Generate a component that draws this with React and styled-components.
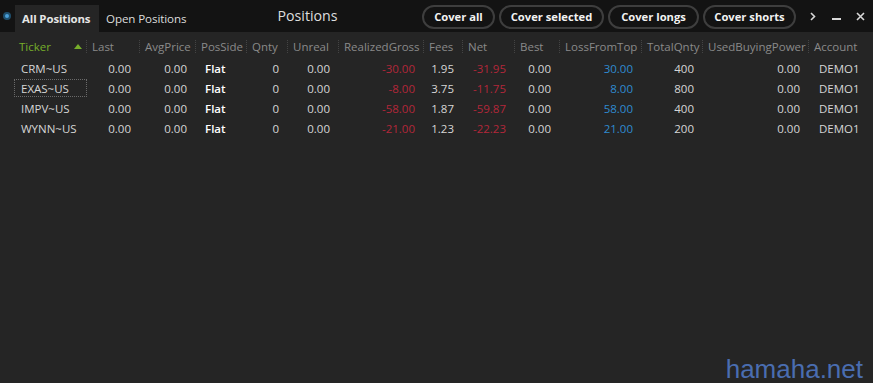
import React from "react";
import styled, { createGlobalStyle } from "styled-components";

const Global = createGlobalStyle`
  html, body { margin: 0; padding: 0; background: #252525; }
  body { font-family: "Open Sans", "Noto Sans", sans-serif; width: 873px; height: 383px; overflow: hidden; }
  #root { width: 873px; height: 383px; }
`;

const Window = styled.div`
  width: 873px;
  height: 383px;
  background: #252525;
  display: flex;
  flex-direction: column;
  position: relative;
  overflow: hidden;
`;

const TopBar = styled.div`
  height: 32px;
  background: #131313;
  display: flex;
  align-items: stretch;
  padding: 0 3px;
  box-sizing: border-box;
`;

const Radio = styled.span`
  width: 8px;
  height: 8px;
  border-radius: 50%;
  box-sizing: border-box;
  border: 2px solid #1f4f6d;
  background: #4a9fd8;
  align-self: center;
  margin-right: 4px;
  margin-top: -1px;
`;

const Tab = styled.div`
  margin-top: 5px;
  padding: 0 7px;
  width: ${p => p.$w}px;
  box-sizing: border-box;
  display: flex;
  align-items: center;
  font-size: ${p => (p.$active ? 11.4 : 11.6)}px;
  letter-spacing: -0.1px;
  color: ${p => (p.$active ? "#e6e6e6" : "#dcdcdc")};
  font-weight: ${p => (p.$active ? 700 : 400)};
  background: ${p => (p.$active ? "#252525" : "transparent")};
  padding-bottom: 1px;
  white-space: nowrap;
`;

const Title = styled.div`
  flex: 1;
  text-align: center;
  align-self: center;
  font-size: 14.2px;
  color: #dedede;
  margin-top: -2px;
`;

const Pills = styled.div`
  display: flex;
  gap: 4px;
  align-items: center;
  padding-top: 1px;
`;

const Pill = styled.button`
  height: 24px;
  border-radius: 12px;
  border: 2px solid #3e3e3e;
  background: #131313;
  color: #f2f2f2;
  font-family: inherit;
  font-weight: 700;
  font-size: 11.2px;
  padding: 0;
  width: ${p => p.$w}px;
  white-space: nowrap;
  display: flex;
  align-items: center;
  justify-content: center;
  box-sizing: border-box;
`;

const WinCtrl = styled.div`
  display: flex;
  align-items: center;
  margin-left: ${p => p.$ml}px;
  width: 20px;
  justify-content: center;
`;

const Grid = styled.div`
  padding: 4px 0 0 14px;
  display: flex;
  flex-direction: column;
`;

const cols = "73px 53px 56px 51px 41px 51px 85px 39px 52px 45px 82px 61px 106px 60px";

const HeaderRow = styled.div`
  display: grid;
  grid-template-columns: ${cols};
  height: 20px;
  align-items: center;
  margin-bottom: 2px;
`;

const HeadCell = styled.div`
  height: 13px;
  line-height: 13px;
  font-size: 11.5px;
  color: ${p => (p.$sorted ? "#76ad2a" : "#8a8a8a")};
  padding-left: 5px;
  padding-right: 5px;
  border-left: ${p => (p.$first ? "none" : "1px dotted #444")};
  display: flex;
  justify-content: space-between;
  align-items: center;
  white-space: nowrap;
  margin-left: ${p => (p.$first ? 0 : -1)}px;
`;

const SortArrow = styled.span`
  width: 0;
  height: 0;
  border-left: 4px solid transparent;
  border-right: 4px solid transparent;
  border-bottom: 5px solid #76ad2a;
`;

const Row = styled.div`
  display: grid;
  grid-template-columns: ${cols};
  height: 20px;
  align-items: center;
`;

const Cell = styled.div`
  font-size: 11.5px;
  color: ${p => p.$color || "#d6d6d6"};
  font-weight: ${p => (p.$bold ? 600 : 400)};
  text-align: ${p => (p.$left ? "left" : "right")};
  padding: ${p => (p.$left ? `0 0 0 ${p.$pl ?? 8}px` : "0 8px 0 0")};
  white-space: nowrap;
  height: 18px;
  line-height: 18px;
  box-sizing: border-box;
  border: ${p => (p.$focus ? "1px dotted #6a6a6a" : "1px solid transparent")};
`;

const Watermark = styled.div`
  position: absolute;
  right: 10px;
  bottom: -2px;
  font-family: "Liberation Sans", Arial, sans-serif;
  font-size: 26px;
  color: #4a6db0;
`;

const headers = [
  "Ticker", "Last", "AvgPrice", "PosSide", "Qnty", "Unreal", "RealizedGross",
  "Fees", "Net", "Best", "LossFromTop", "TotalQnty", "UsedBuyingPower", "Account",
];

const RED = "#b3273a";
const BLUE = "#2f8bd0";

const data = [
  ["CRM~US", "-30.00", "1.95", "-31.95", "30.00", "400"],
  ["EXAS~US", "-8.00", "3.75", "-11.75", "8.00", "800"],
  ["IMPV~US", "-58.00", "1.87", "-59.87", "58.00", "400"],
  ["WYNN~US", "-21.00", "1.23", "-22.23", "21.00", "200"],
];

export default function App() {
  return (
    <Window>
      <Global />
      <TopBar>
        <Radio />
        <Tab $active $w={84}>All Positions</Tab>
        <Tab $w={94}>Open Positions</Tab>
        <Title>Positions</Title>
        <Pills>
          <Pill $w={73}>Cover all</Pill>
          <Pill $w={105}>Cover selected</Pill>
          <Pill $w={91}>Cover longs</Pill>
          <Pill $w={93}>Cover shorts</Pill>
        </Pills>
        <WinCtrl $ml={7}>
          <svg width="6" height="9" viewBox="0 0 6 9">
            <path d="M1 1 L4.5 4.5 L1 8" stroke="#d8d8d8" strokeWidth="1.6" fill="none" />
          </svg>
        </WinCtrl>
        <WinCtrl $ml={3}>
          <svg width="9" height="9" viewBox="0 0 9 9">
            <rect x="0" y="6" width="9" height="2" fill="#d8d8d8" />
          </svg>
        </WinCtrl>
        <WinCtrl $ml={4}>
          <svg width="9" height="9" viewBox="0 0 9 9">
            <path d="M1 1 L8 8 M8 1 L1 8" stroke="#d8d8d8" strokeWidth="1.6" />
          </svg>
        </WinCtrl>
      </TopBar>
      <Grid>
        <HeaderRow>
          {headers.map((h, i) => (
            <HeadCell key={h} $first={i === 0} $sorted={i === 0}>
              {h}
              {i === 0 && <SortArrow />}
            </HeadCell>
          ))}
        </HeaderRow>
        {data.map((r, i) => (
          <Row key={r[0]}>
            <Cell $left $pl={6} $focus={i === 1}>{r[0]}</Cell>
            <Cell>0.00</Cell>
            <Cell>0.00</Cell>
            <Cell $left $pl={8} $bold $color="#ffffff">Flat</Cell>
            <Cell>0</Cell>
            <Cell>0.00</Cell>
            <Cell $color={RED}>{r[1]}</Cell>
            <Cell>{r[2]}</Cell>
            <Cell $color={RED}>{r[3]}</Cell>
            <Cell>0.00</Cell>
            <Cell $color={BLUE}>{r[4]}</Cell>
            <Cell>{r[5]}</Cell>
            <Cell>0.00</Cell>
            <Cell $left $pl={9}>DEMO1</Cell>
          </Row>
        ))}
      </Grid>
      <Watermark>hamaha.net</Watermark>
    </Window>
  );
}
